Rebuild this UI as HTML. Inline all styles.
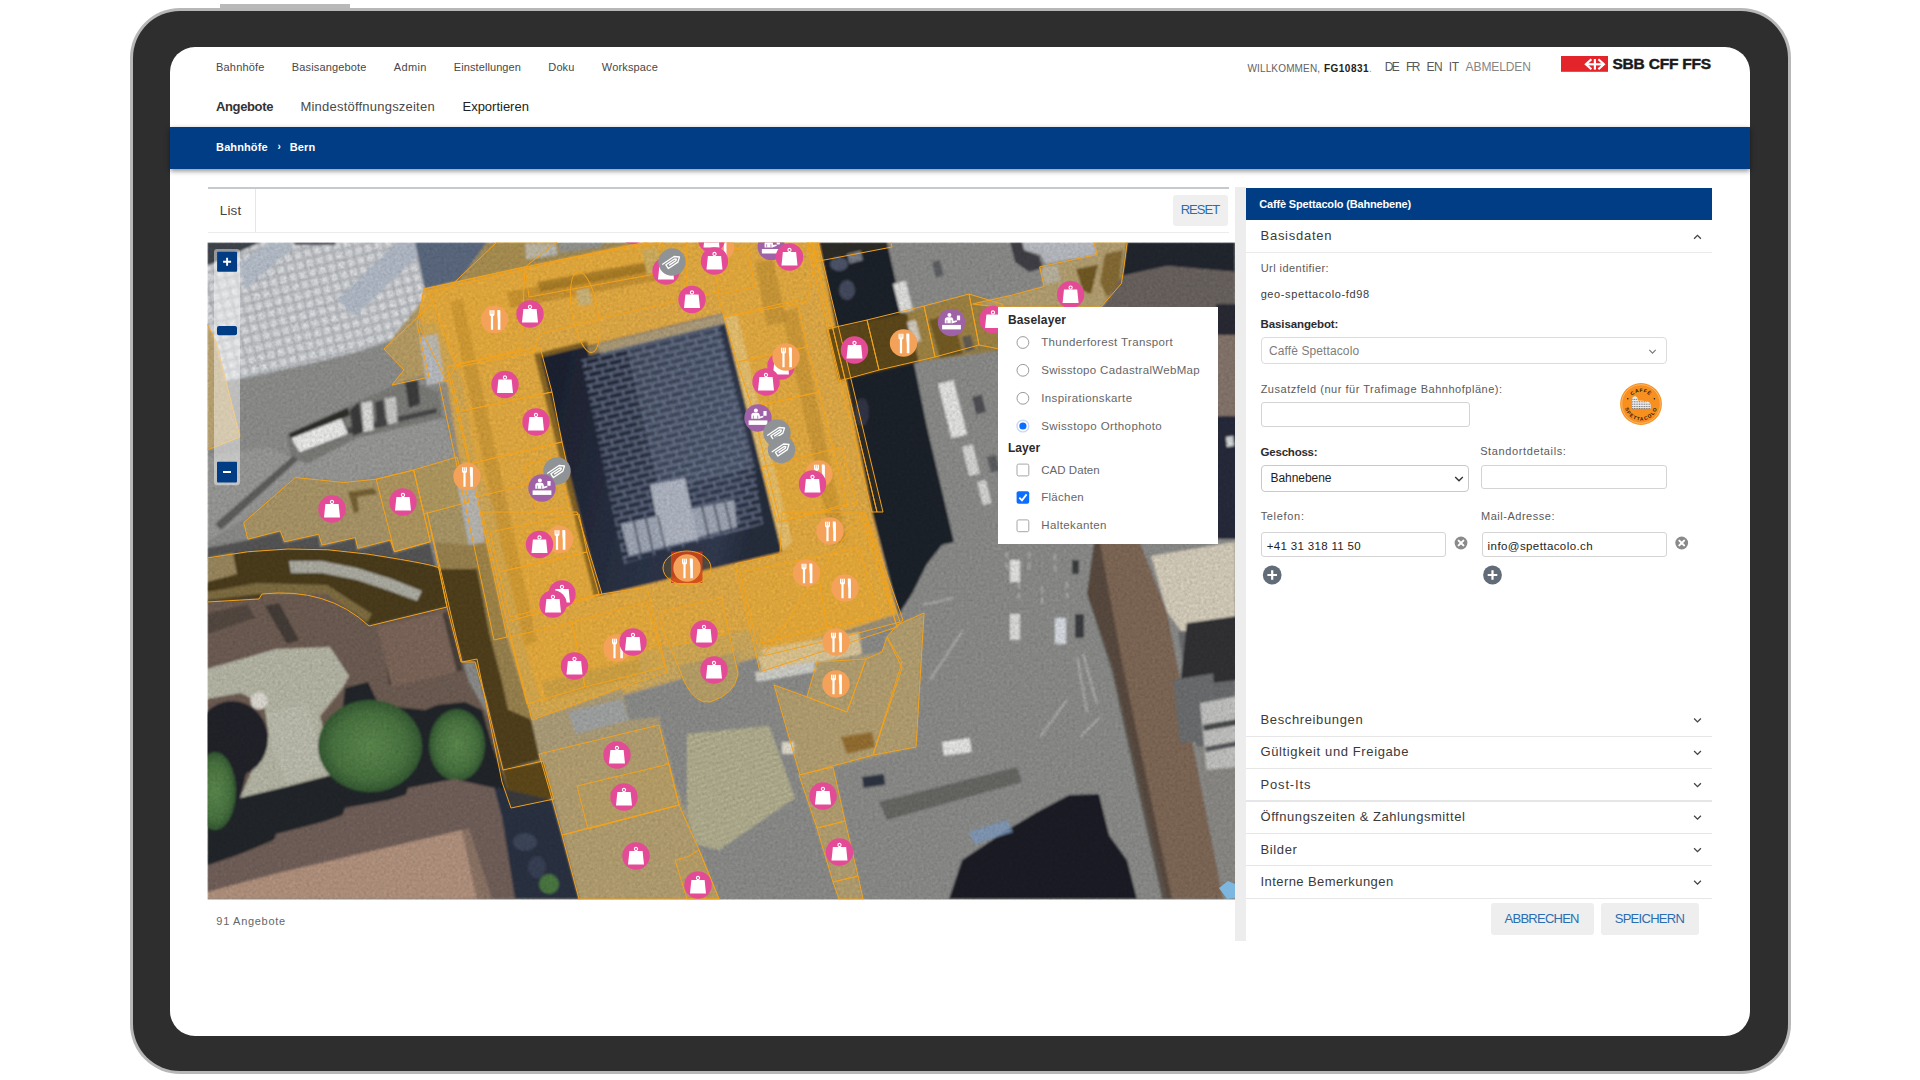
<!DOCTYPE html>
<html lang="de"><head><meta charset="utf-8"><title>Angebote – Bern</title>
<style>
html,body{margin:0;padding:0;background:#fff;}
body{width:1920px;height:1080px;position:relative;overflow:hidden;font-family:"Liberation Sans", sans-serif;}
body>div,body>span,body>svg{position:absolute;}
body>span{white-space:pre;}
svg text{font-family:"Liberation Sans", sans-serif;}
</style></head><body>
<div style="left:220px;top:4px;width:130px;height:6px;background:#b9b9b9;"></div>
<div style="left:129.5px;top:8px;width:1661.2px;height:1066px;background:#b7b7b7;border-radius:50px;"></div>
<div style="left:132.5px;top:11px;width:1655.5px;height:1060px;background:#2e2e2e;border-radius:47px;"></div>
<div style="left:170px;top:47px;width:1580px;height:989px;background:#fff;border-radius:25px;"></div>
<span style="left:216.09px;top:59.50px;font-size:11px;line-height:15px;color:#484848;letter-spacing:0.166px;">Bahnhöfe</span>
<span style="left:291.84px;top:59.50px;font-size:11px;line-height:15px;color:#484848;letter-spacing:0.145px;">Basisangebote</span>
<span style="left:393.84px;top:59.50px;font-size:11px;line-height:15px;color:#484848;letter-spacing:0.333px;">Admin</span>
<span style="left:453.84px;top:59.50px;font-size:11px;line-height:15px;color:#484848;letter-spacing:0.080px;">Einstellungen</span>
<span style="left:548.34px;top:59.50px;font-size:11px;line-height:15px;color:#484848;letter-spacing:0.111px;">Doku</span>
<span style="left:601.84px;top:59.50px;font-size:11px;line-height:15px;color:#484848;letter-spacing:0.149px;">Workspace</span>
<span style="left:215.97px;top:98.00px;font-size:13px;line-height:18px;color:#333;font-weight:700;letter-spacing:-0.363px;">Angebote</span>
<span style="left:300.47px;top:98.00px;font-size:13px;line-height:18px;color:#4a4a4a;letter-spacing:0.215px;">Mindestöffnungszeiten</span>
<span style="left:462.47px;top:98.00px;font-size:13px;line-height:18px;color:#222;letter-spacing:-0.007px;">Exportieren</span>
<span style="left:1247.40px;top:61.70px;font-size:10px;line-height:14px;color:#626262;letter-spacing:0.158px;">WILLKOMMEN,</span>
<span style="left:1323.90px;top:61.70px;font-size:10px;line-height:14px;color:#222;font-weight:700;letter-spacing:0.499px;">FG10831</span>
<span style="left:1368.90px;top:61.70px;font-size:10px;line-height:14px;color:#999;">.</span>
<span style="left:1384.68px;top:59.30px;font-size:12px;line-height:17px;color:#585858;letter-spacing:-1.532px;">DE</span>
<span style="left:1405.88px;top:59.30px;font-size:12px;line-height:17px;color:#585858;letter-spacing:-1.360px;">FR</span>
<span style="left:1426.58px;top:59.30px;font-size:12px;line-height:17px;color:#585858;letter-spacing:-0.632px;">EN</span>
<span style="left:1448.68px;top:59.30px;font-size:12px;line-height:17px;color:#585858;letter-spacing:-0.232px;">IT</span>
<span style="left:1465.58px;top:59.30px;font-size:12px;line-height:17px;color:#858585;letter-spacing:-0.099px;">ABMELDEN</span>
<svg style="left:1561px;top:56.2px" width="47.4" height="15.8" viewBox="0 0 47.4 15.8"><rect width="47.4" height="15.8" fill="#e3242b"/><g fill="none" stroke="#fff" stroke-width="2.2" stroke-linejoin="miter"><path d="M30.4 3.3 L24.9 8.3 L30.4 13.3"/><path d="M37.4 3.3 L42.9 8.3 L37.4 13.3"/><path d="M25.4 8.3 H42.4"/><path d="M33.9 3 V13.6"/></g></svg>
<span style="left:1612.47px;top:53.30px;font-size:15.5px;line-height:22px;color:#1a1a1a;font-weight:700;letter-spacing:-0.207px;-webkit-text-stroke:0.45px #1a1a1a;">SBB CFF FFS</span>
<div style="left:170px;top:127px;width:1580px;height:41.5px;background:#003d85;box-shadow:0 2px 5px rgba(0,0,0,.45);"></div>
<span style="left:216.09px;top:140.00px;font-size:11px;line-height:15px;color:#fff;font-weight:700;letter-spacing:0.112px;">Bahnhöfe</span>
<span style="left:277.60px;top:140.00px;font-size:10px;line-height:14px;color:#fff;font-weight:700;">›</span>
<span style="left:289.84px;top:140.00px;font-size:11px;line-height:15px;color:#fff;font-weight:700;letter-spacing:0.069px;">Bern</span>
<div style="left:207.5px;top:187px;width:1021px;height:1.6px;background:#c6c9ce;"></div>
<div style="left:207.5px;top:231.5px;width:1021px;height:1.5px;background:#ececec;"></div>
<div style="left:254.5px;top:189px;width:1px;height:42.5px;background:#e6e6e6;"></div>
<span style="left:219.80px;top:200.50px;font-size:13.4px;line-height:19px;color:#444;letter-spacing:0.165px;">List</span>
<div style="left:1173px;top:195px;width:54.5px;height:30.5px;background:#efefef;border-radius:3px;"></div>
<span style="left:1180.72px;top:201.30px;font-size:13px;line-height:18px;color:#2a6db0;letter-spacing:-0.983px;">RESET</span>
<svg style="left:207px;top:242px" width="1029" height="658" viewBox="0 0 1029 658">
<defs>
<pattern id="pave" width="10" height="10" patternUnits="userSpaceOnUse" patternTransform="rotate(-14)">
 <rect width="10" height="10" fill="#b4b7bc"/><rect x="1.5" y="1.5" width="7" height="7" fill="#dcdee1"/></pattern>
<pattern id="roofgrid" width="15" height="13" patternUnits="userSpaceOnUse" patternTransform="rotate(-13.5)">
 <path d="M0 0.8 H15 M0 7.3 H15 M2 0.8 V7.3 M9.5 7.3 V13.8" stroke="#76819a" stroke-width="1.7" fill="none"/></pattern>
<pattern id="hatch" width="8" height="5" patternUnits="userSpaceOnUse" patternTransform="rotate(-18)">
 <rect width="8" height="5" fill="#b9b596"/><rect y="2.5" width="8" height="1.6" fill="#a3a183"/></pattern>
<linearGradient id="roofg" x1="0" y1="0" x2="1" y2="0.25">
 <stop offset="0" stop-color="#1a1f2d"/><stop offset=".25" stop-color="#222838"/><stop offset=".6" stop-color="#2c3447"/><stop offset=".88" stop-color="#323b50"/><stop offset="1" stop-color="#262d3e"/></linearGradient>
<radialGradient id="tree"><stop offset="0" stop-color="#5d8a4f"/><stop offset=".7" stop-color="#4a7541"/><stop offset="1" stop-color="#355a33"/></radialGradient>
<filter id="soft" x="-2%" y="-2%" width="104%" height="104%"><feGaussianBlur stdDeviation="1.3"/></filter>
<filter id="noise" x="0" y="0" width="100%" height="100%"><feTurbulence type="fractalNoise" baseFrequency="0.35" numOctaves="2" seed="7"/><feColorMatrix type="matrix" values="0 0 0 0 0  0 0 0 0 0  0 0 0 0 0  0.9 0.9 0.9 0 -0.95"/></filter>
<clipPath id="mclip"><rect x="0.5" y="0.5" width="1028" height="657"/></clipPath>
</defs>
<g clip-path="url(#mclip)">
<g filter="url(#soft)">
<rect width="1030" height="659" fill="#8c8d8b"/>
<polygon points="0,0 208,0 218,47 214,86 186,98 150,110 105,121 35,137 0,142" fill="url(#pave)" />
<polygon points="32,22 62,0 84,0 84,7 38,48" fill="#b7bfcb" />
<polygon points="130,57 190,0 210,0 213,12 148,74" fill="#b3bbc8" />
<polygon points="0,0 54,0 0,24" fill="#3f444e" />
<polygon points="86,0 130,0 128,3 88,3" fill="#4a4e57" />
<polygon points="208,0 280,0 252,38 218,47" fill="#5b6a80" />
<polygon points="280,0 436,0 436,1 318,27 252,40" fill="#a38d58" />
<polygon points="0,142 35,137 105,121 150,110 186,98 214,86 225,130 240,140 250,215 208,228 140,240 88,235 40,275 0,300" fill="#8e8f8d" />
<polygon points="80,192 150,160 200,138 232,150 236,176 200,186 150,196 100,222 84,214" fill="#7b7b79" />
<polygon points="81.5,191.7 140.7,165.8 143,173 86,200" fill="#2e2e2c" />
<polygon points="140,186 229.6,166 230,171 141,192" fill="#4a4a48" />
<polygon points="84.3,196.3 134.3,176.5 140.7,191.7 92.6,210.2" fill="#ebebe9" />
<polygon points="143,168 152,160 156,190 146,194" fill="#3a3a3a" />
<polygon points="154.6,161.1 164.8,159.3 166.7,188 156.5,189.9" fill="#dcdcda" />
<polygon points="168,160 176,158 179,184 170,186" fill="#444" />
<polygon points="177.8,156.5 188.9,154.7 190.7,180.6 180.6,182.4" fill="#c9c9c7" />
<polygon points="198,140 211,138 213,162 202,166" fill="#3c3c3c" />
<polygon points="0,215 60,205 100,222 150,196 236,176 250,215 208,228 140,240 88,235 40,275 0,300" fill="#999a97" />
<polygon points="8,282 86,214 91,218 14,288" fill="#4b4b49" opacity=".75"/>
<polygon points="0,82 9,100 33,195 0,208" fill="#b6a47c" />
<polygon points="217,47 318,25 470,-8 600,-30 612,0 665,270 690,372 640,388 325,478 300,395 272,270 252,215 240,140 212,84" fill="#e2ac47" />
<polygon points="177,107 214,60 214,86 226,130 186,143 197,128" fill="#b29c6c" />
<polygon points="243,60 256,57 300,262 330,400 318,404 285,262" fill="#c4943a" opacity=".7"/>
<polygon points="300,50 470,18 474,34 304,66" fill="#b98a32" opacity=".75"/>
<polygon points="330,40 455,17 458,27 333,50" fill="#8a6a28" opacity=".7"/>
<polygon points="575,70 590,66 640,300 625,304" fill="#c4943a" opacity=".75"/>
<polygon points="548,20 566,18 580,80 560,84" fill="#b78a35" opacity=".6"/>
<polygon points="548,408 652,390 655,412 556,432" fill="#dcc89c" />
<polygon points="335,440 440,415 445,430 340,458" fill="#c9a250" />
<polygon points="212,84 240,140 252,215 272,270 300,395 325,478 338,474 314,392 287,268 267,213 255,138 228,80" fill="#c9a860" opacity=".75"/>
<polygon points="325,478 440,447 556,414 552,402 438,433 322,464" fill="#d2ad5e" opacity=".7"/>
<polygon points="433,448 556,414 549,386 433,410" fill="#c8aa66" opacity=".7"/>
<polygon points="327,112 380,99 381,104 333.6,115.2 393,353.6 387,355" fill="#6b5220" opacity=".8"/>
<polygon points="333.6,115.2 515.8,71.3 575,310 393,353.6" fill="url(#roofg)" />
<polygon points="374,118 513,84 548,228 556,282 417,322" fill="url(#roofgrid)" opacity=".85"/>
<polygon points="390,102 515.8,71.3 518,82 394,113" fill="#aab0bb" opacity=".55"/>
<polygon points="420,108 512,86 548,225 452,250" fill="#8a95ab" opacity=".22"/>
<polygon points="414,282 527,258 530,285 422,314" fill="#a0a7b6" />
<polygon points="443,243 478,236 491,297 455,305" fill="#b0b6c3" />
<polygon points="426,278.451 427.6,278.451 434.6,311.92 433,311.92" fill="#2a3142" opacity=".85"/>
<polygon points="438,275.903 439.6,275.903 446.6,308.841 445,308.841" fill="#2a3142" opacity=".85"/>
<polygon points="450,273.354 451.6,273.354 458.6,305.761 457,305.761" fill="#2a3142" opacity=".85"/>
<polygon points="494,264.009 495.6,264.009 502.6,294.469 501,294.469" fill="#2a3142" opacity=".85"/>
<polygon points="506,261.46 507.6,261.46 514.6,291.389 513,291.389" fill="#2a3142" opacity=".85"/>
<polygon points="517,259.124 518.6,259.124 525.6,288.566 524,288.566" fill="#2a3142" opacity=".85"/>
<polygon points="603,0 680,0 690,45 697,72 720,185 740,270 747,300 735,303 720,322 705,352 692,372 665,270 612,0" fill="#1d2029" />
<ellipse cx="632" cy="22" rx="9" ry="7" fill="#5b6379" opacity=".8"/>
<ellipse cx="640" cy="48" rx="8" ry="10" fill="#4f576c" opacity=".8"/>
<ellipse cx="655" cy="170" rx="7" ry="14" fill="#3a4052" opacity=".7"/>
<polygon points="620,87 700,71 712,120 632,139" fill="#51401c" />
<polygon points="700,71 762,52 795,62 798,108 712,120" fill="#97804a" />
<polygon points="722,78 745,72 756,112 733,116" fill="#5e4a1e" opacity=".8"/>
<polygon points="765.6,62 804.3,53.3 837.1,44.5 832.7,24.9 890.3,12.5 886.7,0 920.2,0 917,25 914.4,41.6 894,65 791,65" fill="#ae9f7a" />
<polygon points="869,27 891,22.7 884,52 876,49" fill="#5e4a1d" opacity=".9"/>
<polygon points="898,12 916,8 912,42 900,55 893,40" fill="#6e5828" opacity=".8"/>
<polygon points="815,0 887,0 890,12.5 838.5,22 834,12.5 817,8" fill="#b9bcc2" />
<polygon points="803,0 815,0 817,8 832,14 836,26 822,30 808,20" fill="#3f4146" />
<polygon points="833.4,24.9 850.2,22.7 853.9,38.7 837.1,43.1" fill="#b3b3ab" />
<polygon points="920,0 1028,0 1028,30 960,24 915,34" fill="#24262f" />
<polygon points="915,34 960,24 1028,30 1028,70 895,66" fill="#6b6460" />
<polygon points="1009,62 1030,62 1030,93 1009,93" fill="#2a2c35" />
<polygon points="1009,93 1030,93 1030,174 1009,174" fill="#85766d" />
<polygon points="1009,174 1030,174 1030,297 1009,297" fill="#272c3a" />
<polygon points="1019,195 1026,194 1027,204 1020,205" fill="#d8dadd" />
<rect x="686" y="42" width="13" height="30" fill="#e0e0de" transform="rotate(-14 686 42)"/>
<rect x="700" y="80" width="9" height="22" fill="#cfcfcf" transform="rotate(-14 700 80)"/>
<rect x="731" y="142" width="16" height="56" fill="#e4e4e2" transform="rotate(-14 731 142)"/>
<rect x="755" y="205" width="11" height="30" fill="#d6d6d4" transform="rotate(-14 755 205)"/>
<rect x="770" y="240" width="9" height="24" fill="#d5d5d3" transform="rotate(-14 770 240)"/>
<rect x="640" y="12" width="14" height="10" fill="#767b86" transform="rotate(-14 640 12)"/>
<rect x="725" y="20" width="8" height="16" fill="#5d5f62" transform="rotate(-14 725 20)"/>
<rect x="755" y="95" width="9" height="15" fill="#55565a" transform="rotate(-14 755 95)"/>
<rect x="765" y="155" width="10" height="18" fill="#4f5054" transform="rotate(-14 765 155)"/>
<rect x="780" y="215" width="9" height="16" fill="#5a5b5e" transform="rotate(-14 780 215)"/>
<polygon points="567,443 600,455 610,420 675,410 680,395 690,383 717,371 709,505 627,525 593,533" fill="#ae9f7a" />
<polygon points="592,533 626,525 656,657 632,657" fill="#ae9f7a" />
<polygon points="634,495 665,490 668,505 640,512" fill="#8d6a35" />
<path d="M470 424 L531 410 L531 432 Q528 452 503 460 Q489 462 478 441 Z" fill="#b3a070"/>
<polygon points="480,492 562,484 588,556 512,608 480,600" fill="url(#hatch)" />
<polygon points="279,458 325,478 415,447 422,478 452,475 468,540 492,608 512,657 372,657 347,557 304,566" fill="#ae9f7a" />
<polygon points="361,470 415,457 422,478 369,492" fill="#a2a4a4" />
<polygon points="279,458 318,458 325,482 333,518 296,528" fill="#51401c" />
<polygon points="296,528 336,519 346,556 304,566" fill="#51401c" />
<polygon points="220,230 250,215 272,270 300,395 325,478 279,458 268,420 254,420 240,365 232,327" fill="#9a8350" />
<polygon points="232,327 270,327 282,390 295,440 307,495 296,528 279,458 268,420 254,420 240,365" fill="#51401c" />
<polygon points="36.7,280.5 88.3,235.5 136.7,240.5 169.2,237.2 206.7,228 223.3,299.7 187.5,309.7 183.3,298 150.8,306.3 148.3,295.5 115,303 111.7,292.2 77.5,299.7 73.3,288.8 40.8,297.2" fill="#a39470" />
<polygon points="206.7,228 250,215 272,270 262,303 223.3,299.7" fill="#ab9868" />
<polygon points="41,298 73.3,289.5 77,301 111.7,293 113,305 148.3,296 150,308 183.3,299 187,311 223,301 229,326 183,316 133,309 83,308 33,311 0,316 0,306" fill="#4c4c4e" opacity=".85"/>
<polygon points="141,250 167,246 170,252 150,255 152,270 147,271" fill="#5e4e2a" opacity=".8"/>
<path d="M0 316 Q82 300 160 312 T232 327 L240 365 L162 384 Q120 345 55 352 L52 357 L0 360 Z" fill="#4b3c1b"/>
<polygon points="82,319 115,319 150,326 185,337 215,349 210,359 180,348 150,338 115,331 84,331" fill="#aeada3" />
<polygon points="0,316 26,311 30,332 0,340" fill="#a8956a" opacity=".85"/>
<polygon points="0,350 50,341 120,343 165,372 160,380 118,352 52,352 0,358" fill="#8d7a4c" opacity=".8"/>
<polygon points="0,360 52,357 55,352 120,352 162,384 240,365 262,440 285,480 302,560 0,640" fill="#6e5d52" />
<polygon points="58,364 72,361 92,398 80,402" fill="#3b3432" opacity=".8"/>
<polygon points="176,396 184,393 192,440 182,443" fill="#3b3432" opacity=".8"/>
<polygon points="232,372 240,370 256,428 247,431" fill="#3b3432" opacity=".7"/>
<polygon points="0,372 40,362 48,376 0,392" fill="#4a403c" opacity=".7"/>
<polygon points="170,385 235,370 250,430 185,445" fill="#7d665a" />
<polygon points="138,446 161,440 172,463 218,468 230,463 258,460 275,468 287,509 296,532 300,548 247,540 201,552 138,572 69,597 0,626 0,560 31.6,556 128,532" fill="#22252b" />
<polygon points="0,427 69,407 123,405 142,434 135,447 113,474 122,509 128,532 86,543 33,556 49,520 62,494 57,463 34,451 0,457" fill="#b7b7a7" />
<polygon points="60,470 100,462 112,500 118,530 80,540 62,500" fill="#c2c2b2" opacity=".6"/>
<ellipse cx="25" cy="497" rx="36" ry="38" fill="#21222a"/>
<polygon points="0,520 40,528 33,556 0,566" fill="#21222a" />
<ellipse cx="163" cy="504" rx="52" ry="46" fill="url(#tree)"/>
<ellipse cx="250" cy="503" rx="28" ry="36" fill="url(#tree)"/>
<ellipse cx="8" cy="549" rx="21" ry="39" fill="url(#tree)"/>
<circle cx="342" cy="643" r="11" fill="#4c7842"/>
<circle cx="52" cy="459" r="8.5" fill="#dedcd3"/>
<polygon points="0,623.5 66,601 69,592 135,575 138,566 198,555 201,546 247,537 287,546 300,580 308,657 0,657" fill="#72605a" />
<polygon points="0,650 75,630 255,588 270,657 0,657" fill="#b3937f" />
<polygon points="255,588 262,586 285,657 270,657" fill="#8d7466" />
<polygon points="287,545 345,558 372,657 308,657 295,575" fill="#2c3242" />
<ellipse cx="318" cy="600" rx="12" ry="9" fill="#4a536a" opacity=".6"/>
<ellipse cx="330" cy="625" rx="9" ry="11" fill="#414a60" opacity=".6"/>
<circle cx="342" cy="642" r="10" fill="#4c7842"/>
<polygon points="212,95 230,92 238,140 220,143" fill="#b9bcc0" />
<polygon points="250,240 268,237 278,300 262,303" fill="#b3b8c0" />
<polygon points="369,48 382,46 385,62 372,64" fill="#c4b58c" />
<polygon points="318,1.5 349,1.5 350.5,12.75 319,17.75" fill="#b9b9b1" />
<polygon points="352,0 395,0 396,5 353,11" fill="#8d99a8" opacity=".7"/>
<polygon points="435,8 450,5 455,30 440,33" fill="#c8b070" />
<polygon points="517,75 530,72 585,300 575,309" fill="#e6c884" opacity=".8"/>
<polygon points="380,104.5 517,72 519,81 382,113.5" fill="#d9b873" opacity=".6"/>
<polygon points="887,301 933,301 960,370 1016,657 960,657 905,420 880,352" fill="#7f6757" />
<polygon points="880,352 887,301 893,301 915,420 965,657 955,657 905,430" fill="#4a4038" opacity=".7"/>
<polygon points="944,314 1028,300 1028,383 975,390 960,370" fill="#d6cebc" />
<polygon points="971,390 1028,383 1028,500 990,505" fill="#6a6c6e" />
<polygon points="990,505 1028,500 1028,657 1016,657" fill="#8c8a86" />
<polygon points="979.7,381.3 1030,374 1030,438 973,444.7" fill="#303236" />
<polygon points="966.3,438 1006.3,431.3 1009.7,498 973,501.3" fill="#6c6e70" />
<polygon points="993,461.3 1030,454 1030,524.7 999.7,528" fill="#c2c2c0" />
<polygon points="996,483 1030,477 1030,483 997,489" fill="#4a4b4e" />
<polygon points="998,505 1030,499 1030,504 999,510" fill="#55565a" />
<g stroke="#d9d9d7" stroke-width="1.6" opacity=".55" fill="none"><path d="M716 363 L746 356 M723 438 L756 388 M833 495 L860 458 M873 495 L893 475 M870 415 L880 470 M876 412 L890 462"/><path d="M800 310 V330 M812 340 V360 M822 310 V330 M835 345 V365 M848 312 V332 M860 340 V356" stroke-dasharray="6 5"/></g>
<polygon points="742,657 755,618 800,588 830,570 862,553 892,552 902,593 920,618 930,657" fill="#1b1d26" />
<polygon points="762,590 800,578 806,590 768,602" fill="#7f9cc0" opacity=".8"/>
<rect x="803" y="318" width="10" height="22" fill="#e2e2e0" transform="rotate(0 803 318)"/>
<rect x="803" y="372" width="10" height="26" fill="#dcdcda" transform="rotate(0 803 372)"/>
<rect x="848" y="376" width="11" height="26" fill="#d8dce2" transform="rotate(0 848 376)"/>
<rect x="868" y="372" width="9" height="24" fill="#3a3c42" transform="rotate(0 868 372)"/>
<rect x="735" y="500" width="28" height="14" fill="#e6e6e4" transform="rotate(-8 735 500)"/>
<rect x="865" y="318" width="7" height="14" fill="#3c3d40" transform="rotate(0 865 318)"/>
<rect x="655" y="535" width="22" height="11" fill="#2f3542" transform="rotate(-8 655 535)"/>
<rect x="575" y="500" width="12" height="12" fill="#e0dccd" transform="rotate(0 575 500)"/>
<rect x="548" y="430" width="60" height="10" fill="#cfcfca" transform="rotate(-10 548 430)"/>
<polygon points="672,560 810,525 815,540 680,578" fill="#5f5e5b" opacity=".8"/>
</g>
<rect width="1030" height="659" filter="url(#noise)" opacity=".13"/>
<polygon points="0,82 9,100 33,195 0,208" fill="rgba(255,176,10,.075)" stroke="#f3a21b" stroke-width="1" stroke-linejoin="round"/>
<polygon points="177,107 290,0 350,0 318,25 217,47 210,82 222,135 185,143 197,128" fill="rgba(255,176,10,.075)" stroke="#f3a21b" stroke-width="1" stroke-linejoin="round"/>
<polygon points="217,47 318,25 314,108 250,122 240,140 212,84" fill="rgba(255,176,10,.075)" stroke="#f3a21b" stroke-width="1" stroke-linejoin="round"/>
<polygon points="222,50 370,15 480,-5 480,57 400,75 333,92 327,110 250,125" fill="rgba(255,176,10,.075)" stroke="#f3a21b" stroke-width="1" stroke-linejoin="round"/>
<polygon points="240,125 333,105 345,150 250,170" fill="rgba(255,176,10,.075)" stroke="#f3a21b" stroke-width="1" stroke-linejoin="round"/>
<polygon points="250,170 345,150 355,200 262,222" fill="rgba(255,176,10,.075)" stroke="#f3a21b" stroke-width="1" stroke-linejoin="round"/>
<polygon points="262,222 355,200 362,232 270,255" fill="rgba(255,176,10,.075)" stroke="#f3a21b" stroke-width="1" stroke-linejoin="round"/>
<polygon points="232,140 245,137 300,395 287,398" fill="rgba(255,176,10,.075)" stroke="#f3a21b" stroke-width="1" stroke-linejoin="round"/>
<polygon points="318,25 455,-3 460,30 322,55" fill="rgba(255,176,10,.075)" stroke="#f3a21b" stroke-width="1" stroke-linejoin="round"/>
<polygon points="318,222 350,215 362,265 330,272" fill="rgba(255,176,10,.075)" stroke="#f3a21b" stroke-width="1" stroke-linejoin="round"/>
<polygon points="36.7,280.5 88.3,235.5 136.7,240.5 169.2,237.2 206.7,228 223.3,299.7 187.5,309.7 183.3,298 150.8,306.3 148.3,295.5 115,303 111.7,292.2 77.5,299.7 73.3,288.8 40.8,297.2" fill="rgba(255,176,10,.075)" stroke="#f3a21b" stroke-width="1" stroke-linejoin="round"/>
<polygon points="169.2,237.2 206.7,228 223.3,299.7 187.5,309.7" fill="rgba(255,176,10,.075)" stroke="#f3a21b" stroke-width="1" stroke-linejoin="round"/>
<polygon points="206.7,228 250,215 262,260 217,272" fill="rgba(255,176,10,.075)" stroke="#f3a21b" stroke-width="1" stroke-linejoin="round"/>
<polygon points="275,270 370,270 395,352 300,380" fill="rgba(255,176,10,.075)" stroke="#f3a21b" stroke-width="1" stroke-linejoin="round"/>
<polygon points="283,290 372,272 380,310 292,330" fill="rgba(255,176,10,.075)" stroke="#f3a21b" stroke-width="1" stroke-linejoin="round"/>
<polygon points="292,330 380,310 392,352 303,375" fill="rgba(255,176,10,.075)" stroke="#f3a21b" stroke-width="1" stroke-linejoin="round"/>
<polygon points="300,380 395,352 440,345 460,430 415,445 325,478" fill="rgba(255,176,10,.075)" stroke="#f3a21b" stroke-width="1" stroke-linejoin="round"/>
<polygon points="303,395 365,380 378,445 320,462" fill="rgba(255,176,10,.075)" stroke="#f3a21b" stroke-width="1" stroke-linejoin="round"/>
<polygon points="365,380 440,360 458,425 378,445" fill="rgba(255,176,10,.075)" stroke="#f3a21b" stroke-width="1" stroke-linejoin="round"/>
<polygon points="332,512 452,483 462,523 472,563 355,593 345,557" fill="rgba(255,176,10,.075)" stroke="#f3a21b" stroke-width="1" stroke-linejoin="round"/>
<polygon points="370,544 462,522 472,563 381,587" fill="rgba(255,176,10,.075)" stroke="#f3a21b" stroke-width="1" stroke-linejoin="round"/>
<polygon points="355,593 472,563 492,608 512,657 372,657" fill="rgba(255,176,10,.075)" stroke="#f3a21b" stroke-width="1" stroke-linejoin="round"/>
<polygon points="468,618 480,615 492,608 512,657 480,657" fill="rgba(255,176,10,.075)" stroke="#f3a21b" stroke-width="1" stroke-linejoin="round"/>
<polygon points="220,270 255,420 270,417 295,540 304,566 347,557 336,519 296,528 279,458 268,420 254,420 240,365 232,327" fill="rgba(255,176,10,.075)" stroke="#f3a21b" stroke-width="1" stroke-linejoin="round"/>
<polygon points="528,322 573,312 575,270 653,270 690,385 553,430" fill="rgba(255,176,10,.075)" stroke="#f3a21b" stroke-width="1" stroke-linejoin="round"/>
<polygon points="533,330 608,315 620,385 550,402" fill="rgba(255,176,10,.075)" stroke="#f3a21b" stroke-width="1" stroke-linejoin="round"/>
<polygon points="608,315 652,305 672,375 620,385" fill="rgba(255,176,10,.075)" stroke="#f3a21b" stroke-width="1" stroke-linejoin="round"/>
<polygon points="655,270 693,380 640,394 556,414" fill="rgba(255,176,10,.075)" stroke="#f3a21b" stroke-width="1" stroke-linejoin="round"/>
<polygon points="658,270 696,378 690,385" fill="rgba(255,176,10,.075)" stroke="#f3a21b" stroke-width="1" stroke-linejoin="round"/>
<polygon points="600,455 610,420 659,417 640,470" fill="rgba(255,176,10,.075)" stroke="#f3a21b" stroke-width="1" stroke-linejoin="round"/>
<polygon points="567,443 600,455 640,470 659,417 675,410 680,395 695,420 666,513 593,533" fill="rgba(255,176,10,.075)" stroke="#f3a21b" stroke-width="1" stroke-linejoin="round"/>
<polygon points="680,395 690,383 717,371 709,505 666,513 695,426" fill="rgba(255,176,10,.075)" stroke="#f3a21b" stroke-width="1" stroke-linejoin="round"/>
<polygon points="592,533 626,525 638,579 610,586" fill="rgba(255,176,10,.075)" stroke="#f3a21b" stroke-width="1" stroke-linejoin="round"/>
<polygon points="610,586 638,579 651,634 626,640" fill="rgba(255,176,10,.075)" stroke="#f3a21b" stroke-width="1" stroke-linejoin="round"/>
<polygon points="626,640 651,634 656,657 632,657" fill="rgba(255,176,10,.075)" stroke="#f3a21b" stroke-width="1" stroke-linejoin="round"/>
<polygon points="600,0 665,270 670,270 605,0" fill="rgba(255,176,10,.075)" stroke="#f3a21b" stroke-width="1" stroke-linejoin="round"/>
<polygon points="605,0 670,270 676,270 611,0" fill="rgba(255,176,10,.075)" stroke="#f3a21b" stroke-width="1" stroke-linejoin="round"/>
<polygon points="517,75 590,58 600,105 530,120" fill="rgba(255,176,10,.075)" stroke="#f3a21b" stroke-width="1" stroke-linejoin="round"/>
<polygon points="530,120 600,105 612,150 545,165" fill="rgba(255,176,10,.075)" stroke="#f3a21b" stroke-width="1" stroke-linejoin="round"/>
<polygon points="545,165 612,150 640,262 573,280" fill="rgba(255,176,10,.075)" stroke="#f3a21b" stroke-width="1" stroke-linejoin="round"/>
<polygon points="555,225 635,205 650,262 570,280" fill="rgba(255,176,10,.075)" stroke="#f3a21b" stroke-width="1" stroke-linejoin="round"/>
<polygon points="480,-5 600,-25 612,0 600,60 517,75 510,50 480,57" fill="rgba(255,176,10,.075)" stroke="#f3a21b" stroke-width="1" stroke-linejoin="round"/>
<polygon points="505,10 540,5 548,45 512,52" fill="rgba(255,176,10,.075)" stroke="#f3a21b" stroke-width="1" stroke-linejoin="round"/>
<polygon points="620,87 660,78 672,128 632,139" fill="rgba(255,176,10,.075)" stroke="#f3a21b" stroke-width="1" stroke-linejoin="round"/>
<polygon points="660,78 717,64 728,115 672,128" fill="rgba(255,176,10,.075)" stroke="#f3a21b" stroke-width="1" stroke-linejoin="round"/>
<polygon points="717,64 762,52 772,103 728,115" fill="rgba(255,176,10,.075)" stroke="#f3a21b" stroke-width="1" stroke-linejoin="round"/>
<polygon points="762,52 795,62 798,108 772,103" fill="rgba(255,176,10,.075)" stroke="#f3a21b" stroke-width="1" stroke-linejoin="round"/>
<polygon points="765.6,62 804.3,53.3 837.1,44.5 832.7,24.9 890.3,12.5 886.7,0 920.2,0 917,25 914.4,41.6 894,65 791,65" fill="rgba(255,176,10,.075)" stroke="#f3a21b" stroke-width="1" stroke-linejoin="round"/>
<polygon points="600,-5 680,-20 685,5 607,20" fill="rgba(255,176,10,.075)" stroke="#f3a21b" stroke-width="1" stroke-linejoin="round"/>
<ellipse cx="378" cy="70" rx="13" ry="41" transform="rotate(-10 378 70)" fill="rgba(255,176,10,.075)" stroke="#f3a21b" stroke-width="1" stroke-linejoin="round"/>
<path d="M0 316 Q82 300 160 312 T232 327 L240 365 L162 384 Q120 345 55 352 L52 357 L0 360" fill="none" stroke="#f3a21b" stroke-width="1" stroke-linejoin="round"/>
<path d="M456 369 Q451.5 373 453 380 L478 441 Q489 462 503 460 Q528 452 531 432 L514.5 356 Z" fill="rgba(255,176,10,.075)" stroke="#f3a21b" stroke-width="1" stroke-linejoin="round"/>
<path d="M467.6 403.2 L522.6 391" fill="none" stroke="#f3a21b" stroke-width="1" stroke-linejoin="round"/>
<rect x="464" y="309.5" width="31.5" height="31.5" fill="#c8321e" opacity=".85"/>
<ellipse cx="480" cy="326" rx="24" ry="17" fill="rgba(255,170,0,.15)" stroke="#f3a21b" stroke-width="1" stroke-linejoin="round"/>
<g transform="translate(352.5 297.5)"><circle r="13.7" fill="#f4a259"/><path d="M-5 -9.2 H0 V-5.2 Q0 -3.6 -1.4 -3.4 V10.2 H-3.6 V-3.4 Q-5 -3.6 -5 -5.2 Z" fill="#fff"/><path d="M-3.4 -9.2 V-5.6 M-1.6 -9.2 V-5.6" stroke="#f4a259" stroke-width="0.6"/><path d="M2.8 -9.4 H4.8 Q5.9 -9.4 5.9 -8 V10.2 H3.3 V1 Q2.6 -4 2.8 -9.4 Z" fill="#fff"/></g>
<g transform="translate(332.5 302.5)"><circle r="13.7" fill="#e44b96"/><path d="M-6.6 -5 H6.6 L8 8.4 H-8 Z" fill="#fff"/><circle cx="0" cy="-7" r="1.6" fill="none" stroke="#fff" stroke-width="1.1"/></g>
<g transform="translate(355 352)"><circle r="13.7" fill="#e44b96"/><path d="M-6.6 -5 H6.6 L8 8.4 H-8 Z" fill="#fff"/><circle cx="0" cy="-7" r="1.6" fill="none" stroke="#fff" stroke-width="1.1"/></g>
<g transform="translate(346 362)"><circle r="13.7" fill="#e44b96"/><path d="M-6.6 -5 H6.6 L8 8.4 H-8 Z" fill="#fff"/><circle cx="0" cy="-7" r="1.6" fill="none" stroke="#fff" stroke-width="1.1"/></g>
<g transform="translate(410 406)"><circle r="13.7" fill="#f4a259"/><path d="M-5 -9.2 H0 V-5.2 Q0 -3.6 -1.4 -3.4 V10.2 H-3.6 V-3.4 Q-5 -3.6 -5 -5.2 Z" fill="#fff"/><path d="M-3.4 -9.2 V-5.6 M-1.6 -9.2 V-5.6" stroke="#f4a259" stroke-width="0.6"/><path d="M2.8 -9.4 H4.8 Q5.9 -9.4 5.9 -8 V10.2 H3.3 V1 Q2.6 -4 2.8 -9.4 Z" fill="#fff"/></g>
<g transform="translate(426 400)"><circle r="13.7" fill="#e44b96"/><path d="M-6.6 -5 H6.6 L8 8.4 H-8 Z" fill="#fff"/><circle cx="0" cy="-7" r="1.6" fill="none" stroke="#fff" stroke-width="1.1"/></g>
<g transform="translate(367.5 424)"><circle r="13.7" fill="#e44b96"/><path d="M-6.6 -5 H6.6 L8 8.4 H-8 Z" fill="#fff"/><circle cx="0" cy="-7" r="1.6" fill="none" stroke="#fff" stroke-width="1.1"/></g>
<g transform="translate(287.5 77.5)"><circle r="13.7" fill="#f4a259"/><path d="M-5 -9.2 H0 V-5.2 Q0 -3.6 -1.4 -3.4 V10.2 H-3.6 V-3.4 Q-5 -3.6 -5 -5.2 Z" fill="#fff"/><path d="M-3.4 -9.2 V-5.6 M-1.6 -9.2 V-5.6" stroke="#f4a259" stroke-width="0.6"/><path d="M2.8 -9.4 H4.8 Q5.9 -9.4 5.9 -8 V10.2 H3.3 V1 Q2.6 -4 2.8 -9.4 Z" fill="#fff"/></g>
<g transform="translate(323 72)"><circle r="13.7" fill="#e44b96"/><path d="M-6.6 -5 H6.6 L8 8.4 H-8 Z" fill="#fff"/><circle cx="0" cy="-7" r="1.6" fill="none" stroke="#fff" stroke-width="1.1"/></g>
<g transform="translate(298 142.5)"><circle r="13.7" fill="#e44b96"/><path d="M-6.6 -5 H6.6 L8 8.4 H-8 Z" fill="#fff"/><circle cx="0" cy="-7" r="1.6" fill="none" stroke="#fff" stroke-width="1.1"/></g>
<g transform="translate(329 180)"><circle r="13.7" fill="#e44b96"/><path d="M-6.6 -5 H6.6 L8 8.4 H-8 Z" fill="#fff"/><circle cx="0" cy="-7" r="1.6" fill="none" stroke="#fff" stroke-width="1.1"/></g>
<g transform="translate(260 234.5)"><circle r="13.7" fill="#f4a259"/><path d="M-5 -9.2 H0 V-5.2 Q0 -3.6 -1.4 -3.4 V10.2 H-3.6 V-3.4 Q-5 -3.6 -5 -5.2 Z" fill="#fff"/><path d="M-3.4 -9.2 V-5.6 M-1.6 -9.2 V-5.6" stroke="#f4a259" stroke-width="0.6"/><path d="M2.8 -9.4 H4.8 Q5.9 -9.4 5.9 -8 V10.2 H3.3 V1 Q2.6 -4 2.8 -9.4 Z" fill="#fff"/></g>
<g transform="translate(350 229) rotate(-34)"><circle r="13.7" fill="#909395"/><path d="M-9 -3.4 H4.8 L9 0 L4.8 3.4 H-6.6 V-1.1 H3.8 L5.2 0 L3.8 1.1 H-3.6" fill="none" stroke="#fff" stroke-width="1.35" stroke-linejoin="round" stroke-linecap="round"/></g>
<g transform="translate(335 246)"><circle r="13.7" fill="#9f62a7"/><circle cx="-2.1" cy="-7.6" r="2" fill="#fff"/><path d="M-6.7 0.8 V-2.6 Q-6.7 -5.2 -4.2 -5.2 H-0.4 Q1.2 -5.2 1.6 -3.4 L2 -1.6 L5.2 -2.2 L5.5 -0.8 L1.2 0.8 Z" fill="#fff"/><path d="M-4.6 -2.4 V0.8 M-0.3 -2.4 V0.8" stroke="#9f62a7" stroke-width="0.7"/><rect x="5.4" y="-7" width="3.2" height="4.8" rx="0.4" fill="#fff"/><rect x="-9.4" y="2.4" width="18.8" height="4.5" fill="#fff"/></g>
<g transform="translate(125 267)"><circle r="13.7" fill="#e44b96"/><path d="M-6.6 -5 H6.6 L8 8.4 H-8 Z" fill="#fff"/><circle cx="0" cy="-7" r="1.6" fill="none" stroke="#fff" stroke-width="1.1"/></g>
<g transform="translate(196 260)"><circle r="13.7" fill="#e44b96"/><path d="M-6.6 -5 H6.6 L8 8.4 H-8 Z" fill="#fff"/><circle cx="0" cy="-7" r="1.6" fill="none" stroke="#fff" stroke-width="1.1"/></g>
<g transform="translate(425.5 -11.5)"><circle r="13.7" fill="#e44b96"/><path d="M-6.6 -5 H6.6 L8 8.4 H-8 Z" fill="#fff"/><circle cx="0" cy="-7" r="1.6" fill="none" stroke="#fff" stroke-width="1.1"/></g>
<g transform="translate(513.6 5)"><circle r="13.7" fill="#f4a259"/><path d="M-5 -9.2 H0 V-5.2 Q0 -3.6 -1.4 -3.4 V10.2 H-3.6 V-3.4 Q-5 -3.6 -5 -5.2 Z" fill="#fff"/><path d="M-3.4 -9.2 V-5.6 M-1.6 -9.2 V-5.6" stroke="#f4a259" stroke-width="0.6"/><path d="M2.8 -9.4 H4.8 Q5.9 -9.4 5.9 -8 V10.2 H3.3 V1 Q2.6 -4 2.8 -9.4 Z" fill="#fff"/></g>
<g transform="translate(504.5 -3)"><circle r="13.7" fill="#e44b96"/><path d="M-6.6 -5 H6.6 L8 8.4 H-8 Z" fill="#fff"/><circle cx="0" cy="-7" r="1.6" fill="none" stroke="#fff" stroke-width="1.1"/></g>
<g transform="translate(459 29)"><circle r="13.7" fill="#e44b96"/><path d="M-6.6 -5 H6.6 L8 8.4 H-8 Z" fill="#fff"/><circle cx="0" cy="-7" r="1.6" fill="none" stroke="#fff" stroke-width="1.1"/></g>
<g transform="translate(465 20) rotate(-34)"><circle r="13.7" fill="#909395"/><path d="M-9 -3.4 H4.8 L9 0 L4.8 3.4 H-6.6 V-1.1 H3.8 L5.2 0 L3.8 1.1 H-3.6" fill="none" stroke="#fff" stroke-width="1.35" stroke-linejoin="round" stroke-linecap="round"/></g>
<g transform="translate(507.5 19)"><circle r="13.7" fill="#e44b96"/><path d="M-6.6 -5 H6.6 L8 8.4 H-8 Z" fill="#fff"/><circle cx="0" cy="-7" r="1.6" fill="none" stroke="#fff" stroke-width="1.1"/></g>
<g transform="translate(564.25 4.6)"><circle r="13.7" fill="#9f62a7"/><circle cx="-2.1" cy="-7.6" r="2" fill="#fff"/><path d="M-6.7 0.8 V-2.6 Q-6.7 -5.2 -4.2 -5.2 H-0.4 Q1.2 -5.2 1.6 -3.4 L2 -1.6 L5.2 -2.2 L5.5 -0.8 L1.2 0.8 Z" fill="#fff"/><path d="M-4.6 -2.4 V0.8 M-0.3 -2.4 V0.8" stroke="#9f62a7" stroke-width="0.7"/><rect x="5.4" y="-7" width="3.2" height="4.8" rx="0.4" fill="#fff"/><rect x="-9.4" y="2.4" width="18.8" height="4.5" fill="#fff"/></g>
<g transform="translate(582.5 15)"><circle r="13.7" fill="#e44b96"/><path d="M-6.6 -5 H6.6 L8 8.4 H-8 Z" fill="#fff"/><circle cx="0" cy="-7" r="1.6" fill="none" stroke="#fff" stroke-width="1.1"/></g>
<g transform="translate(485 57.5)"><circle r="13.7" fill="#e44b96"/><path d="M-6.6 -5 H6.6 L8 8.4 H-8 Z" fill="#fff"/><circle cx="0" cy="-7" r="1.6" fill="none" stroke="#fff" stroke-width="1.1"/></g>
<g transform="translate(574 124)"><circle r="13.7" fill="#e44b96"/><path d="M-6.6 -5 H6.6 L8 8.4 H-8 Z" fill="#fff"/><circle cx="0" cy="-7" r="1.6" fill="none" stroke="#fff" stroke-width="1.1"/></g>
<g transform="translate(579 115)"><circle r="13.7" fill="#f4a259"/><path d="M-5 -9.2 H0 V-5.2 Q0 -3.6 -1.4 -3.4 V10.2 H-3.6 V-3.4 Q-5 -3.6 -5 -5.2 Z" fill="#fff"/><path d="M-3.4 -9.2 V-5.6 M-1.6 -9.2 V-5.6" stroke="#f4a259" stroke-width="0.6"/><path d="M2.8 -9.4 H4.8 Q5.9 -9.4 5.9 -8 V10.2 H3.3 V1 Q2.6 -4 2.8 -9.4 Z" fill="#fff"/></g>
<g transform="translate(559 140)"><circle r="13.7" fill="#e44b96"/><path d="M-6.6 -5 H6.6 L8 8.4 H-8 Z" fill="#fff"/><circle cx="0" cy="-7" r="1.6" fill="none" stroke="#fff" stroke-width="1.1"/></g>
<g transform="translate(551 176)"><circle r="13.7" fill="#9f62a7"/><circle cx="-2.1" cy="-7.6" r="2" fill="#fff"/><path d="M-6.7 0.8 V-2.6 Q-6.7 -5.2 -4.2 -5.2 H-0.4 Q1.2 -5.2 1.6 -3.4 L2 -1.6 L5.2 -2.2 L5.5 -0.8 L1.2 0.8 Z" fill="#fff"/><path d="M-4.6 -2.4 V0.8 M-0.3 -2.4 V0.8" stroke="#9f62a7" stroke-width="0.7"/><rect x="5.4" y="-7" width="3.2" height="4.8" rx="0.4" fill="#fff"/><rect x="-9.4" y="2.4" width="18.8" height="4.5" fill="#fff"/></g>
<g transform="translate(570 191) rotate(-34)"><circle r="13.7" fill="#909395"/><path d="M-9 -3.4 H4.8 L9 0 L4.8 3.4 H-6.6 V-1.1 H3.8 L5.2 0 L3.8 1.1 H-3.6" fill="none" stroke="#fff" stroke-width="1.35" stroke-linejoin="round" stroke-linecap="round"/></g>
<g transform="translate(574.5 207.5) rotate(-34)"><circle r="13.7" fill="#909395"/><path d="M-9 -3.4 H4.8 L9 0 L4.8 3.4 H-6.6 V-1.1 H3.8 L5.2 0 L3.8 1.1 H-3.6" fill="none" stroke="#fff" stroke-width="1.35" stroke-linejoin="round" stroke-linecap="round"/></g>
<g transform="translate(612 232)"><circle r="13.7" fill="#f4a259"/><path d="M-5 -9.2 H0 V-5.2 Q0 -3.6 -1.4 -3.4 V10.2 H-3.6 V-3.4 Q-5 -3.6 -5 -5.2 Z" fill="#fff"/><path d="M-3.4 -9.2 V-5.6 M-1.6 -9.2 V-5.6" stroke="#f4a259" stroke-width="0.6"/><path d="M2.8 -9.4 H4.8 Q5.9 -9.4 5.9 -8 V10.2 H3.3 V1 Q2.6 -4 2.8 -9.4 Z" fill="#fff"/></g>
<g transform="translate(605.5 242)"><circle r="13.7" fill="#e44b96"/><path d="M-6.6 -5 H6.6 L8 8.4 H-8 Z" fill="#fff"/><circle cx="0" cy="-7" r="1.6" fill="none" stroke="#fff" stroke-width="1.1"/></g>
<g transform="translate(647.5 108)"><circle r="13.7" fill="#e44b96"/><path d="M-6.6 -5 H6.6 L8 8.4 H-8 Z" fill="#fff"/><circle cx="0" cy="-7" r="1.6" fill="none" stroke="#fff" stroke-width="1.1"/></g>
<g transform="translate(696.5 101)"><circle r="13.7" fill="#f4a259"/><path d="M-5 -9.2 H0 V-5.2 Q0 -3.6 -1.4 -3.4 V10.2 H-3.6 V-3.4 Q-5 -3.6 -5 -5.2 Z" fill="#fff"/><path d="M-3.4 -9.2 V-5.6 M-1.6 -9.2 V-5.6" stroke="#f4a259" stroke-width="0.6"/><path d="M2.8 -9.4 H4.8 Q5.9 -9.4 5.9 -8 V10.2 H3.3 V1 Q2.6 -4 2.8 -9.4 Z" fill="#fff"/></g>
<g transform="translate(744.5 80.5)"><circle r="13.7" fill="#9f62a7"/><circle cx="-2.1" cy="-7.6" r="2" fill="#fff"/><path d="M-6.7 0.8 V-2.6 Q-6.7 -5.2 -4.2 -5.2 H-0.4 Q1.2 -5.2 1.6 -3.4 L2 -1.6 L5.2 -2.2 L5.5 -0.8 L1.2 0.8 Z" fill="#fff"/><path d="M-4.6 -2.4 V0.8 M-0.3 -2.4 V0.8" stroke="#9f62a7" stroke-width="0.7"/><rect x="5.4" y="-7" width="3.2" height="4.8" rx="0.4" fill="#fff"/><rect x="-9.4" y="2.4" width="18.8" height="4.5" fill="#fff"/></g>
<g transform="translate(786 77.5)"><circle r="13.7" fill="#e44b96"/><path d="M-6.6 -5 H6.6 L8 8.4 H-8 Z" fill="#fff"/><circle cx="0" cy="-7" r="1.6" fill="none" stroke="#fff" stroke-width="1.1"/></g>
<g transform="translate(863.6 52.6)"><circle r="13.7" fill="#e44b96"/><path d="M-6.6 -5 H6.6 L8 8.4 H-8 Z" fill="#fff"/><circle cx="0" cy="-7" r="1.6" fill="none" stroke="#fff" stroke-width="1.1"/></g>
<g transform="translate(480 326)"><circle r="13.7" fill="#f4a259"/><path d="M-5 -9.2 H0 V-5.2 Q0 -3.6 -1.4 -3.4 V10.2 H-3.6 V-3.4 Q-5 -3.6 -5 -5.2 Z" fill="#fff"/><path d="M-3.4 -9.2 V-5.6 M-1.6 -9.2 V-5.6" stroke="#f4a259" stroke-width="0.6"/><path d="M2.8 -9.4 H4.8 Q5.9 -9.4 5.9 -8 V10.2 H3.3 V1 Q2.6 -4 2.8 -9.4 Z" fill="#fff"/></g>
<g transform="translate(623 289)"><circle r="13.7" fill="#f4a259"/><path d="M-5 -9.2 H0 V-5.2 Q0 -3.6 -1.4 -3.4 V10.2 H-3.6 V-3.4 Q-5 -3.6 -5 -5.2 Z" fill="#fff"/><path d="M-3.4 -9.2 V-5.6 M-1.6 -9.2 V-5.6" stroke="#f4a259" stroke-width="0.6"/><path d="M2.8 -9.4 H4.8 Q5.9 -9.4 5.9 -8 V10.2 H3.3 V1 Q2.6 -4 2.8 -9.4 Z" fill="#fff"/></g>
<g transform="translate(599.5 331)"><circle r="13.7" fill="#f4a259"/><path d="M-5 -9.2 H0 V-5.2 Q0 -3.6 -1.4 -3.4 V10.2 H-3.6 V-3.4 Q-5 -3.6 -5 -5.2 Z" fill="#fff"/><path d="M-3.4 -9.2 V-5.6 M-1.6 -9.2 V-5.6" stroke="#f4a259" stroke-width="0.6"/><path d="M2.8 -9.4 H4.8 Q5.9 -9.4 5.9 -8 V10.2 H3.3 V1 Q2.6 -4 2.8 -9.4 Z" fill="#fff"/></g>
<g transform="translate(638 346)"><circle r="13.7" fill="#f4a259"/><path d="M-5 -9.2 H0 V-5.2 Q0 -3.6 -1.4 -3.4 V10.2 H-3.6 V-3.4 Q-5 -3.6 -5 -5.2 Z" fill="#fff"/><path d="M-3.4 -9.2 V-5.6 M-1.6 -9.2 V-5.6" stroke="#f4a259" stroke-width="0.6"/><path d="M2.8 -9.4 H4.8 Q5.9 -9.4 5.9 -8 V10.2 H3.3 V1 Q2.6 -4 2.8 -9.4 Z" fill="#fff"/></g>
<g transform="translate(629 400)"><circle r="13.7" fill="#f4a259"/><path d="M-5 -9.2 H0 V-5.2 Q0 -3.6 -1.4 -3.4 V10.2 H-3.6 V-3.4 Q-5 -3.6 -5 -5.2 Z" fill="#fff"/><path d="M-3.4 -9.2 V-5.6 M-1.6 -9.2 V-5.6" stroke="#f4a259" stroke-width="0.6"/><path d="M2.8 -9.4 H4.8 Q5.9 -9.4 5.9 -8 V10.2 H3.3 V1 Q2.6 -4 2.8 -9.4 Z" fill="#fff"/></g>
<g transform="translate(629 442)"><circle r="13.7" fill="#f4a259"/><path d="M-5 -9.2 H0 V-5.2 Q0 -3.6 -1.4 -3.4 V10.2 H-3.6 V-3.4 Q-5 -3.6 -5 -5.2 Z" fill="#fff"/><path d="M-3.4 -9.2 V-5.6 M-1.6 -9.2 V-5.6" stroke="#f4a259" stroke-width="0.6"/><path d="M2.8 -9.4 H4.8 Q5.9 -9.4 5.9 -8 V10.2 H3.3 V1 Q2.6 -4 2.8 -9.4 Z" fill="#fff"/></g>
<g transform="translate(497 392)"><circle r="13.7" fill="#e44b96"/><path d="M-6.6 -5 H6.6 L8 8.4 H-8 Z" fill="#fff"/><circle cx="0" cy="-7" r="1.6" fill="none" stroke="#fff" stroke-width="1.1"/></g>
<g transform="translate(507 428)"><circle r="13.7" fill="#e44b96"/><path d="M-6.6 -5 H6.6 L8 8.4 H-8 Z" fill="#fff"/><circle cx="0" cy="-7" r="1.6" fill="none" stroke="#fff" stroke-width="1.1"/></g>
<g transform="translate(410 513)"><circle r="13.7" fill="#e44b96"/><path d="M-6.6 -5 H6.6 L8 8.4 H-8 Z" fill="#fff"/><circle cx="0" cy="-7" r="1.6" fill="none" stroke="#fff" stroke-width="1.1"/></g>
<g transform="translate(417 555)"><circle r="13.7" fill="#e44b96"/><path d="M-6.6 -5 H6.6 L8 8.4 H-8 Z" fill="#fff"/><circle cx="0" cy="-7" r="1.6" fill="none" stroke="#fff" stroke-width="1.1"/></g>
<g transform="translate(429 614)"><circle r="13.7" fill="#e44b96"/><path d="M-6.6 -5 H6.6 L8 8.4 H-8 Z" fill="#fff"/><circle cx="0" cy="-7" r="1.6" fill="none" stroke="#fff" stroke-width="1.1"/></g>
<g transform="translate(491 643)"><circle r="13.7" fill="#e44b96"/><path d="M-6.6 -5 H6.6 L8 8.4 H-8 Z" fill="#fff"/><circle cx="0" cy="-7" r="1.6" fill="none" stroke="#fff" stroke-width="1.1"/></g>
<g transform="translate(616 554)"><circle r="13.7" fill="#e44b96"/><path d="M-6.6 -5 H6.6 L8 8.4 H-8 Z" fill="#fff"/><circle cx="0" cy="-7" r="1.6" fill="none" stroke="#fff" stroke-width="1.1"/></g>
<g transform="translate(632.5 610)"><circle r="13.7" fill="#e44b96"/><path d="M-6.6 -5 H6.6 L8 8.4 H-8 Z" fill="#fff"/><circle cx="0" cy="-7" r="1.6" fill="none" stroke="#fff" stroke-width="1.1"/></g>
<rect x="7" y="7" width="26" height="236.3" rx="3" fill="rgba(255,255,255,.45)"/>
<rect x="10.1" y="9.8" width="20" height="20" rx="1" fill="#003d85"/><path d="M16.1 19.8 H24.1 M20.1 15.8 V23.8" stroke="#fff" stroke-width="1.9"/>
<rect x="10" y="83.9" width="20" height="9.3" rx="2" fill="#003d85"/>
<rect x="10" y="219.7" width="20" height="20.7" rx="1" fill="#003d85"/><path d="M16 230 H24" stroke="#fff" stroke-width="1.9"/>
<path d="M1012 646 L1021 639 L1028 642 V656 L1020 657 Z" fill="#7db7e0"/>
</g></svg>
<div style="left:998.2px;top:307px;width:220px;height:236.5px;background:#fff;"></div>
<span style="left:1007.88px;top:312.30px;font-size:12px;line-height:17px;color:#2a2a2a;font-weight:700;letter-spacing:0.178px;">Baselayer</span>
<span style="left:1007.88px;top:439.50px;font-size:12px;line-height:17px;color:#2a2a2a;font-weight:700;letter-spacing:0.052px;">Layer</span>
<span style="left:1041.21px;top:334.20px;font-size:11.5px;line-height:16px;color:#666;letter-spacing:0.370px;">Thunderforest Transport</span>
<span style="left:1041.21px;top:362.00px;font-size:11.5px;line-height:16px;color:#666;letter-spacing:0.328px;">Swisstopo CadastralWebMap</span>
<span style="left:1041.21px;top:390.20px;font-size:11.5px;line-height:16px;color:#666;letter-spacing:0.408px;">Inspirationskarte</span>
<span style="left:1041.21px;top:417.80px;font-size:11.5px;line-height:16px;color:#666;letter-spacing:0.387px;">Swisstopo Orthophoto</span>
<span style="left:1041.21px;top:461.60px;font-size:11.5px;line-height:16px;color:#666;letter-spacing:0.042px;">CAD Daten</span>
<span style="left:1041.21px;top:489.40px;font-size:11.5px;line-height:16px;color:#666;letter-spacing:0.264px;">Flächen</span>
<span style="left:1041.21px;top:517.20px;font-size:11.5px;line-height:16px;color:#666;letter-spacing:0.393px;">Haltekanten</span>
<svg style="left:0;top:0" width="1920" height="1080" viewBox="0 0 1920 1080"><circle cx="1022.9" cy="342.5" r="5.9" fill="#fff" stroke="#9a9a9a" stroke-width="1"/><circle cx="1022.9" cy="370.3" r="5.9" fill="#fff" stroke="#9a9a9a" stroke-width="1"/><circle cx="1022.9" cy="398.3" r="5.9" fill="#fff" stroke="#9a9a9a" stroke-width="1"/><circle cx="1022.9" cy="426" r="5.9" fill="#fff" stroke="#c9d9f5" stroke-width="1.4"/><circle cx="1022.9" cy="426" r="3.6" fill="#0d6efd"/><rect x="1017" y="464.1" width="11.8" height="11.8" rx="1.5" fill="#fff" stroke="#a6a6a6" stroke-width="1"/><rect x="1017" y="519.9" width="11.8" height="11.8" rx="1.5" fill="#fff" stroke="#a6a6a6" stroke-width="1"/><rect x="1016.6" y="491.2" width="12.6" height="12.6" rx="2" fill="#0d6efd"/><path d="M1019.3 497.6 L1022 500.4 L1026.6 494.4" fill="none" stroke="#fff" stroke-width="1.8"/></svg>
<span style="left:216.34px;top:913.70px;font-size:11px;line-height:15px;color:#666;letter-spacing:0.697px;">91 Angebote</span>
<div style="left:1235px;top:187px;width:11px;height:753.5px;background:#ededed;"></div>
<div style="left:1246px;top:187.8px;width:465.5px;height:32.6px;background:#003d85;"></div>
<span style="left:1259.34px;top:196.90px;font-size:11px;line-height:15px;color:#fff;font-weight:700;letter-spacing:-0.174px;">Caffè Spettacolo (Bahnebene)</span>
<span style="left:1260.52px;top:226.70px;font-size:13px;line-height:18px;color:#3a3a3a;letter-spacing:0.731px;">Basisdaten</span>
<div style="left:1246px;top:252px;width:465.5px;height:1.2px;background:#e9e9e9;"></div>
<span style="left:1260.64px;top:260.80px;font-size:11px;line-height:15px;color:#5a5a5a;letter-spacing:0.451px;">Url identifier:</span>
<span style="left:1260.64px;top:287.20px;font-size:11px;line-height:15px;color:#3a3a3a;letter-spacing:0.619px;">geo-spettacolo-fd98</span>
<span style="left:1260.61px;top:315.60px;font-size:11.5px;line-height:16px;color:#2c2c2c;font-weight:700;letter-spacing:-0.120px;">Basisangebot:</span>
<div style="left:1261px;top:337px;width:406px;height:27.3px;background:#fff;border:1px solid #dcdcdc;border-radius:4px;box-sizing:border-box;"></div>
<span style="left:1268.98px;top:343.10px;font-size:12px;line-height:17px;color:#7d7d7d;letter-spacing:0.108px;">Caffè Spettacolo</span>
<span style="left:1260.64px;top:381.50px;font-size:11px;line-height:15px;color:#5a5a5a;letter-spacing:0.525px;">Zusatzfeld (nur für Trafimage Bahnhofpläne):</span>
<div style="left:1261px;top:402px;width:208.5px;height:24.8px;background:#fff;border:1px solid #d4d4d4;border-radius:3px;box-sizing:border-box;"></div>
<span style="left:1260.61px;top:443.70px;font-size:11.5px;line-height:16px;color:#2c2c2c;font-weight:700;letter-spacing:-0.226px;">Geschoss:</span>
<span style="left:1480.14px;top:444.20px;font-size:11px;line-height:15px;color:#5a5a5a;letter-spacing:0.622px;">Standortdetails:</span>
<div style="left:1261px;top:465px;width:207.5px;height:27.3px;background:#fff;border:1px solid #c9c9c9;border-radius:4px;box-sizing:border-box;"></div>
<span style="left:1270.48px;top:470.30px;font-size:12px;line-height:17px;color:#1e1e1e;letter-spacing:-0.046px;">Bahnebene</span>
<div style="left:1480.8px;top:465.3px;width:186px;height:24.2px;background:#fff;border:1px solid #d4d4d4;border-radius:3px;box-sizing:border-box;"></div>
<span style="left:1260.64px;top:509.20px;font-size:11px;line-height:15px;color:#5a5a5a;letter-spacing:0.691px;">Telefon:</span>
<span style="left:1481.04px;top:509.20px;font-size:11px;line-height:15px;color:#5a5a5a;letter-spacing:0.518px;">Mail-Adresse:</span>
<div style="left:1261px;top:531.9px;width:185px;height:25.6px;background:#fff;border:1px solid #d4d4d4;border-radius:3px;box-sizing:border-box;"></div>
<span style="left:1266.81px;top:537.80px;font-size:11.5px;line-height:16px;color:#222;letter-spacing:0.320px;">+41 31 318 11 50</span>
<div style="left:1481.7px;top:531.9px;width:185px;height:25.6px;background:#fff;border:1px solid #d4d4d4;border-radius:3px;box-sizing:border-box;"></div>
<span style="left:1487.61px;top:537.80px;font-size:11.5px;line-height:16px;color:#222;letter-spacing:0.413px;">info@spettacolo.ch</span>
<svg style="left:0;top:0" width="1920" height="1080" viewBox="0 0 1920 1080"><path d="M1694.1 238.7 L1697.5 235.3 L1700.9 238.7" fill="none" stroke="#444" stroke-width="1.3"/><path d="M1649.3 349.9 L1652.5 353.1 L1655.7 349.9" fill="none" stroke="#777" stroke-width="1.1"/><path d="M1455.2 476.90000000000003 L1459 480.7 L1462.8 476.90000000000003" fill="none" stroke="#333" stroke-width="1.4"/><path d="M1694.1 718.5 L1697.5 721.9000000000001 L1700.9 718.5" fill="none" stroke="#444" stroke-width="1.3"/><path d="M1694.1 751.0 L1697.5 754.4000000000001 L1700.9 751.0" fill="none" stroke="#444" stroke-width="1.3"/><path d="M1694.1 783.3 L1697.5 786.7 L1700.9 783.3" fill="none" stroke="#444" stroke-width="1.3"/><path d="M1694.1 815.8 L1697.5 819.2 L1700.9 815.8" fill="none" stroke="#444" stroke-width="1.3"/><path d="M1694.1 848.3 L1697.5 851.7 L1700.9 848.3" fill="none" stroke="#444" stroke-width="1.3"/><path d="M1694.1 880.8 L1697.5 884.2 L1700.9 880.8" fill="none" stroke="#444" stroke-width="1.3"/><circle cx="1461" cy="543" r="6.4" fill="#8a8a8a"/><path d="M1458.6 540.6 L1463.4 545.4 M1463.4 540.6 L1458.6 545.4" stroke="#fff" stroke-width="2" stroke-linecap="round"/><circle cx="1681.7" cy="543" r="6.4" fill="#8a8a8a"/><path d="M1679.3 540.6 L1684.1000000000001 545.4 M1684.1000000000001 540.6 L1679.3 545.4" stroke="#fff" stroke-width="2" stroke-linecap="round"/><circle cx="1272.2" cy="575" r="9.4" fill="#626c79"/><path d="M1267.4 575 H1277.0 M1272.2 570.2 V579.8" stroke="#fff" stroke-width="2.2"/><circle cx="1492.5" cy="575" r="9.4" fill="#626c79"/><path d="M1487.7 575 H1497.3 M1492.5 570.2 V579.8" stroke="#fff" stroke-width="2.2"/></svg>
<svg style="left:1618.4px;top:380.7px" width="46" height="46" viewBox="-23 -23 46 46"><circle r="20.9" fill="#f7901e"/><circle r="19.3" fill="none" stroke="#fcc88c" stroke-width="0.7"/><defs><path id="arcT" d="M-12 0 A12 12 0 0 1 12 0"/><path id="arcB" d="M-16.5 0 A16.5 16.5 0 0 0 16.5 0"/></defs><text font-weight="700" font-size="5" fill="#1f1a14" letter-spacing="0.6"><textPath href="#arcT" startOffset="50%" text-anchor="middle">CAFFÈ</textPath></text><text font-weight="700" font-size="4.9" fill="#1f1a14" letter-spacing="1.05"><textPath href="#arcB" startOffset="50.5%" text-anchor="middle">SPETTACOLO</textPath></text><path d="M-9 4.8 V-4.5 Q-8.6 -7.7 -5.6 -7.7 Q-3.4 -7.4 -3 -3.4 Q2 -3.2 6 -2.4 Q9.6 -1.5 9.8 1 V4.8 Z" fill="#ececec"/><path d="M-8.6 -4.6 H-3.4 M-8.8 -2.2 H5.5 M-8.8 0.2 H9.4 M-8.8 2.6 H9.6 M-8.8 4.6 H9.6" stroke="#3a3a3a" stroke-width="0.7" stroke-dasharray="1 0.7"/><circle cx="-13.2" cy="-5.3" r="0.8" fill="#1f1a14"/><circle cx="13.4" cy="-5.3" r="0.8" fill="#1f1a14"/></svg>
<span style="left:1260.52px;top:711.00px;font-size:13px;line-height:18px;color:#3a3a3a;letter-spacing:0.626px;">Beschreibungen</span>
<span style="left:1260.52px;top:743.40px;font-size:13px;line-height:18px;color:#3a3a3a;letter-spacing:0.613px;">Gültigkeit und Freigabe</span>
<span style="left:1260.52px;top:775.70px;font-size:13px;line-height:18px;color:#3a3a3a;letter-spacing:0.833px;">Post-Its</span>
<span style="left:1260.52px;top:808.30px;font-size:13px;line-height:18px;color:#3a3a3a;letter-spacing:0.555px;">Öffnungszeiten &amp; Zahlungsmittel</span>
<span style="left:1260.52px;top:840.80px;font-size:13px;line-height:18px;color:#3a3a3a;letter-spacing:0.612px;">Bilder</span>
<span style="left:1260.52px;top:873.30px;font-size:13px;line-height:18px;color:#3a3a3a;letter-spacing:0.421px;">Interne Bemerkungen</span>
<div style="left:1246px;top:735.6px;width:465.5px;height:1.2px;background:#e6e6e6;"></div>
<div style="left:1246px;top:768px;width:465.5px;height:1.2px;background:#e6e6e6;"></div>
<div style="left:1246px;top:800.4px;width:465.5px;height:1.2px;background:#e6e6e6;"></div>
<div style="left:1246px;top:832.8px;width:465.5px;height:1.2px;background:#e6e6e6;"></div>
<div style="left:1246px;top:865.3px;width:465.5px;height:1.2px;background:#e6e6e6;"></div>
<div style="left:1246px;top:897.6px;width:465.5px;height:1.2px;background:#e6e6e6;"></div>
<div style="left:1491px;top:902.8px;width:102.6px;height:32.7px;background:#eeeeee;border-radius:3px;"></div>
<span style="left:1504.52px;top:910.20px;font-size:13px;line-height:18px;color:#2a6db0;letter-spacing:-0.739px;">ABBRECHEN</span>
<div style="left:1601px;top:902.8px;width:98px;height:32.7px;background:#eeeeee;border-radius:3px;"></div>
<span style="left:1614.72px;top:910.20px;font-size:13px;line-height:18px;color:#2a6db0;letter-spacing:-0.719px;">SPEICHERN</span>
</body></html>
